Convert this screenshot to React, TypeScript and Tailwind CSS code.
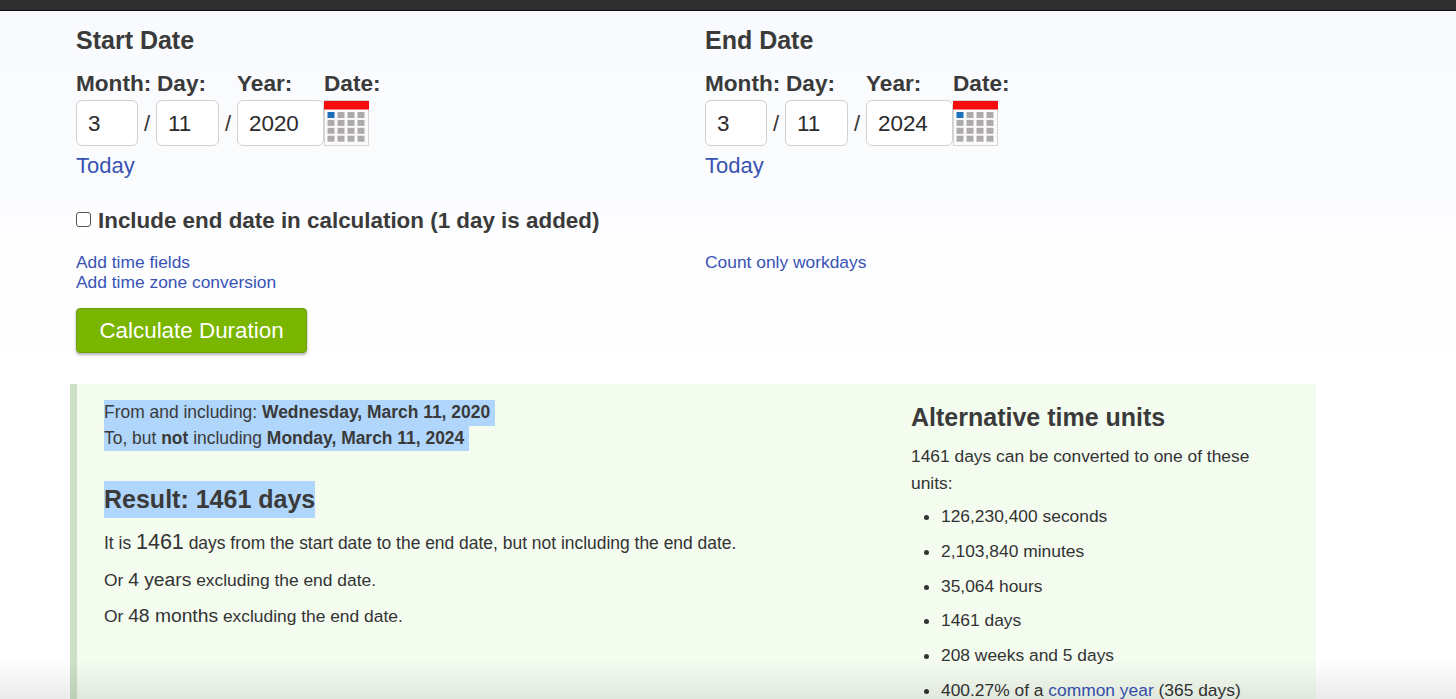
import React from "react";

function CalendarIcon() {
  const cells = [];
  for (let r = 0; r < 4; r++) {
    for (let c = 0; c < 4; c++) {
      cells.push(
        <rect key={`${r}-${c}`} x={3.5 + c * 10} y={12 + r * 7.9} width={7} height={6} fill={r === 0 && c === 0 ? "#1c6fb8" : "#aeaaaa"} />
      );
    }
  }
  return (
    <svg width="45" height="46" viewBox="0 0 45 46" className="block">
      <rect x="0.5" y="0.5" width="44" height="45" fill="#fbfbfb" stroke="#d5d5d5" />
      <rect x="0" y="1" width="45" height="8.5" fill="#f40d0d" />
      {cells}
    </svg>
  );
}

function DateField({ value, width, col, label, sep, labelPad }: { value: string; width: string; col: string; label: string; sep: boolean; labelPad?: string }) {
  return (
    <div className={`flex flex-col ${col}`}>
      <div className={`text-[22.6px] leading-[30px] font-bold text-[#3a3a3a] whitespace-nowrap mb-[1px] ${labelPad ?? ""}`}>{label}</div>
      <div className="flex items-center">
        <div className={`${width} h-[46px] rounded-[6px] border border-[#d2d0d0] bg-white flex items-center pl-[11px] pt-[2px] text-[22.4px] text-[#2b2b2b]`}>{value}</div>
        {sep && <div className="flex-1 text-center text-[22px] text-[#333]">/</div>}
      </div>
    </div>
  );
}

function DateColumn({ title, year, width }: { title: string; year: string; width: string }) {
  return (
    <div className={`${width} flex flex-col`}>
      <h2 className="text-[25px] leading-[30px] font-bold text-[#3a3a3a]">{title}</h2>
      <div className="flex mt-[14px]">
        <DateField label="Month:" value="3" width="w-[62px]" col="w-[80px]" sep />
        <DateField label="Day:" value="11" width="w-[63px]" col="w-[81px]" sep labelPad="pl-[1px]" />
        <DateField label="Year:" value={year} width="w-[87px]" col="w-[87px]" sep={false} />
        <div className="flex flex-col">
          <div className="text-[22.6px] leading-[30px] font-bold text-[#3a3a3a] mb-[1px]">Date:</div>
          <CalendarIcon />
        </div>
      </div>
      <a className="text-[22px] leading-[28px] text-[#3853b4] mt-[6px]">Today</a>
    </div>
  );
}

export default function App() {
  const units: React.ReactNode[] = [
    "126,230,400 seconds",
    "2,103,840 minutes",
    "35,064 hours",
    "1461 days",
    "208 weeks and 5 days",
    <>400.27% of a <a className="text-[#3853b4]">common year</a> (365 days)</>,
  ];
  return (
    <div className="relative h-[699px] w-[1456px] overflow-hidden bg-white font-['Liberation_Sans',Arial,sans-serif] text-[#333]">
      <div className="h-[11px] bg-[#2f2f2f] border-b border-[#111]" />
      <div className="bg-gradient-to-b from-[#f8fafd] to-white pl-[76px] pt-[14px] h-[373px]">
        <div className="flex">
          <DateColumn title="Start Date" year="2020" width="w-[629px]" />
          <DateColumn title="End Date" year="2024" width="w-[500px]" />
        </div>
        <label className="flex items-center mt-[27px] h-[28px]">
          <input type="checkbox" className="appearance-none w-[15px] h-[15px] rounded-[3px] border border-[#555] bg-white mr-[7px] -mt-[3px]" />
          <span className="text-[22.4px] font-bold text-[#3a3a3a] whitespace-nowrap">Include end date in calculation (1 day is added)</span>
        </label>
        <div className="flex mt-[17px] text-[17.4px] leading-[20px] text-[#3853b4]">
          <div className="w-[629px] flex flex-col">
            <a>Add time fields</a>
            <a>Add time zone conversion</a>
          </div>
          <a>Count only workdays</a>
        </div>
        <button className="mt-[16px] block w-[231px] h-[45px] rounded-[4px] bg-[#7ab500] border border-[#6f9f0a] text-white text-[22.4px] shadow-[0_2px_3px_rgba(0,0,0,0.3)]">Calculate Duration</button>
      </div>
      <div className="ml-[70px] w-[1246px] h-[400px] bg-[#f4fcf0] border-l-[7px] border-[#cde0c6] flex">
        <div className="w-[834px] pl-[27px] pt-[16px]">
          <div className="text-[17.45px] leading-[25.5px] text-[#3a3a3a]">
            <div><span className="bg-[#b0d6fb] inline-block pr-[5px]">From and including: <b>Wednesday, March 11, 2020</b></span></div>
            <div><span className="bg-[#b0d6fb] inline-block pr-[5px]">To, but <b>not</b> including <b>Monday, March 11, 2024</b></span></div>
          </div>
          <div className="mt-[30px]"><span className="inline-block bg-[#b0d6fb] text-[25px] leading-[37px] font-bold text-[#3a3a3a]">Result: 1461 days</span></div>
          <p className="mt-[9px] text-[17.45px] leading-[30px] text-[#333]">It is <span className="text-[21.5px]">1461</span> days from the start date to the end date, but not including the end date.</p>
          <p className="mt-[7px] text-[17.4px] leading-[30px] text-[#333]">Or <span className="text-[19.25px]">4 years</span> excluding the end date.</p>
          <p className="mt-[6px] text-[17.4px] leading-[30px] text-[#333]">Or <span className="text-[19.25px]">48 months</span> excluding the end date.</p>
        </div>
        <div className="flex-1 pt-[18px]">
          <h3 className="text-[25px] leading-[30px] font-bold text-[#3a3a3a]">Alternative time units</h3>
          <p className="mt-[11px] w-[370px] text-[17.4px] leading-[27px] text-[#333]">1461 days can be converted to one of these units:</p>
          <ul className="mt-[2px] list-disc pl-[30px] text-[17.4px] leading-[34.8px] text-[#333]">
            {units.map((u, i) => <li key={i}>{u}</li>)}
          </ul>
        </div>
      </div>
      <div className="absolute left-0 right-0 bottom-0 h-[40px] bg-gradient-to-b from-transparent to-[rgba(0,0,0,0.08)] pointer-events-none" />
    </div>
  );
}
